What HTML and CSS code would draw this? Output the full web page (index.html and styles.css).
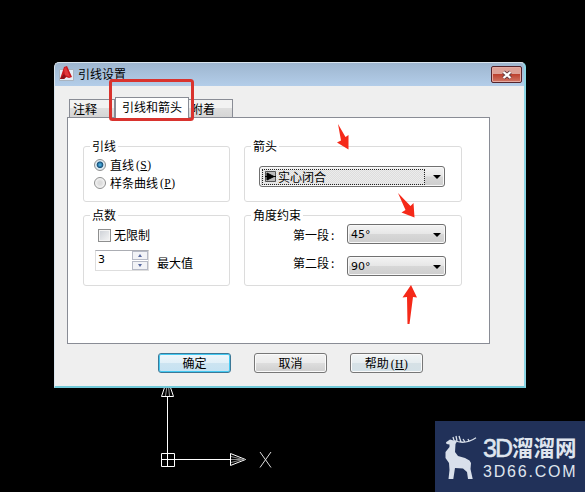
FILE: index.html
```html
<!DOCTYPE html>
<html lang="zh-CN">
<head>
<meta charset="utf-8">
<title>引线设置</title>
<link rel="stylesheet" href="styles.css">
</head>
<body>
<main class="canvas">
  <svg class="axes" width="125" height="92" viewBox="150 380 125 92" fill="none" stroke="#fff">
    <path d="M161.500 396.500L165 386H170L173.500 396.500Z"/>
    <path d="M165.500 396L167 386M169.500 396L168.500 386" stroke="#999"/>
    <path d="M167.500 396V466M161 459.500H231M161.500 453.500H174.500V466.500H161.500Z"/>
    <path d="M230.500 453.500L245.500 459.500L230.500 465.500Z"/>
    <path d="M231 456.500L243 459.500L231 462.500M231 459.500H245" stroke="#888"/>
    <path d="M260 452L271 467.500M271 452L260 467.500" stroke="#ddd"/>
  </svg>

  <section class="dialog">
    <header class="titlebar">
      <svg class="app-icon" width="16" height="16" viewBox="0 0 16 16">
        <path d="M.5 3.500H14.500V14.500H.5Z" fill="#e5edf5" stroke="#a9b3bf"/>
        <path d="M1 13L5 1L8 0L13 11L10 12L7 11L5 13Z" fill="#c9171e"/>
        <path d="M5 3L6 9L11 11L7 1Z" fill="#e0373b"/>
        <path d="M1 13L5 8L7 11L5 13Z" fill="#8e1117"/>
      </svg>
      <h1 class="title">引线设置</h1>
      <button class="close" aria-label="关闭">
        <svg width="12" height="10" viewBox="0 0 12 10"><path d="M2.500 2L9.500 8M9.500 2L2.500 8" stroke="#643b40" stroke-width="4"/><path d="M2.500 2L9.500 8M9.500 2L2.500 8" stroke="#fff" stroke-width="2.300"/></svg>
      </button>
    </header>
    <div class="body">
      <nav class="tabs">
        <span class="tab">注释</span><span class="tab active">引线和箭头</span><span class="tab last">附着</span>
      </nav>
      <div class="panel">
        <div class="group">
          <h2 class="legend">引线</h2>
          <label class="radio-row"><i class="radio checked"></i>直线<span class="key">(<u>S</u>)</span></label>
          <label class="radio-row"><i class="radio"></i>样条曲线<span class="key">(<u>P</u>)</span></label>
        </div>
        <div class="group">
          <h2 class="legend">箭头</h2>
          <div class="select wide">
            <span class="focus"><svg width="11" height="11" viewBox="0 0 11 11"><path d="M.5 .5H10.500V10.500H.5Z" fill="#bbb" stroke="#555"/><path d="M0 5.500H11M2 2L9 5.500L2 9Z" fill="#000" stroke="#000"/></svg>实心闭合</span>
            <i class="arrow"></i>
          </div>
        </div>
        <div class="group">
          <h2 class="legend">点数</h2>
          <label class="check-row"><i class="checkbox"></i>无限制</label>
          <div class="spin-row">
            <div class="spinner"><span class="num">3</span><span class="steps"><i class="step up"></i><i class="step down"></i></span></div>
            <span class="max">最大值</span>
          </div>
        </div>
        <div class="group">
          <h2 class="legend">角度约束</h2>
          <div class="angle-row first"><span class="angle-label">第一段<b class="colon">:</b></span><div class="select small"><span class="num">45°</span><i class="arrow"></i></div></div>
          <div class="angle-row second"><span class="angle-label">第二段<b class="colon">:</b></span><div class="select small"><span class="num">90°</span><i class="arrow"></i></div></div>
        </div>
      </div>
      <footer class="buttons">
        <button class="btn primary">确定</button>
        <button class="btn">取消</button>
        <button class="btn help">帮助<span class="key">(<u>H</u>)</span></button>
      </footer>
    </div>
  </section>

  <svg class="marks" width="585" height="492" viewBox="0 0 585 492">
    <rect x="110.500" y="80.500" width="82" height="39" rx="2" fill="none" stroke="#d9332e" stroke-width="3"/>
    <g fill="#f52919">
      <path d="M338 124L345.500 137L348.500 135L348.500 149.500L337 142.500L341 140.500Z"/>
      <path d="M398 193L410.500 206L413.500 203L414.500 217.500L401.500 212.500L405.500 210Z"/>
      <path d="M411 285L417 297.500L413 297L409.500 324L407.500 324L407 297L402.500 297.500Z"/>
    </g>
  </svg>

  <aside class="brand">
    <svg class="deer" width="34" height="45" viewBox="0 0 34 45">
      <path d="M1 7.300L5 4.500L12 6.500L10.500 9L10 17L13 21L20 23L24.500 25.500L26 28L25.500 34L27.700 44H23L22 37L18 33.500L10 33L8.300 44H3.500L4.500 35L4 28L.5 23L.5 17L4.500 12V9.500L1.500 9Z" fill="#d9e0eb"/>
      <path d="M9 5.500C15 8 23 8 31 2.700M9 5.500L8 2M12 6L11 1M16 7L14 1M20 7L18 4M24 6.500L23 4" fill="none" stroke="#d9e0eb" stroke-width="1.300"/>
    </svg>
    <div class="brand-text">
      <div class="brand-name"><span class="latin">3D</span>溜溜网</div>
      <div class="brand-url">3D66.COM</div>
    </div>
  </aside>
</main>
</body>
</html>
```
FILE: styles.css
```css
* { box-sizing: border-box; }
body {
  margin: 0;
  background: #000;
  font: 12px/14px "Noto Sans CJK SC", sans-serif;
  color: #000;
}
h1, h2 { margin: 0; font: inherit; }
button { font: inherit; color: inherit; padding: 0; }
.canvas { position: relative; width: 585px; height: 492px; overflow: hidden; background: #000; }
.axes { position: absolute; left: 150px; top: 380px; }
.dialog {
  position: absolute; left: 54px; top: 62px;
  width: 472px; height: 326px;
  background: #efefef;
  border: 1px solid #d9e4ed;
  border-right: 2px solid #8bd5e4;
  border-bottom: 2px solid #72c9d8;
  border-radius: 5px 5px 0 0;
  overflow: hidden;
}
.titlebar {
  display: flex; align-items: center;
  height: 23px; padding: 0 2px 1px 4px;
  background: linear-gradient(#9eb6cf, #b3cde9);
}
.title { margin-left: 3px; flex: 1; }
.close {
  display: flex; align-items: center; justify-content: center;
  width: 31px; height: 17px; margin-top: 1px;
  border: 1px solid #54232b; border-radius: 2px;
  background: linear-gradient(#dda197 0 45%, #bd4230 50%, #d07766);
  box-shadow: inset 0 0 0 1px #e5aaa1;
}
.body { padding: 11px 0 0 12px; }
.tabs { display: flex; align-items: flex-end; height: 20px; padding-left: 2px; }
.tab {
  width: 46px; height: 18px; padding: 2px 0 0 3px;
  border: 1px solid #898c95; border-bottom: 0;
  background: linear-gradient(#f2f2f2 0 45%, #dedede 50%, #d5d5d5);
  white-space: nowrap;
}
.tab.active {
  position: relative; width: 74px; height: 21px; padding: 2px 0 0 6px;
  margin-bottom: -1px; background: #fff;
}
.tab.last { width: 44px; padding-left: 2px; border-left: 0; }
.panel {
  display: grid; grid-template-columns: 147px 218px; grid-template-rows: 56px 71px;
  column-gap: 14px; row-gap: 13px; align-content: start;
  width: 423px; height: 227px; padding: 28px 0 0 15px;
  border: 1px solid #898c95; background: #fff;
}
.group { border: 1px solid #dcdcdc; border-radius: 3px; }
.legend { width: max-content; height: 14px; margin: -8px 0 0 6px; padding: 0 2px; background: #fff; }
.radio-row { display: flex; align-items: center; height: 18px; padding-left: 10px; }
.legend + .radio-row { margin-top: 3px; }
.radio {
  width: 12px; height: 12px; margin-right: 4px;
  border: 1px solid #8e8f8f; border-radius: 50%;
  background: radial-gradient(circle, #ddd 25%, #f5f5f5 70%);
}
.radio.checked { background: radial-gradient(circle at 50% 48%, #45a6d7 0 12%, #174f79 40%, #dceaf2 52%); }
.key { font-family: "Liberation Serif", serif; font-size: 11.5px; letter-spacing: .5px; margin-left: 2px; }
.key u { text-underline-offset: 1px; }
.select {
  display: flex; align-items: center;
  border: 1px solid #707070; border-radius: 3px;
  background: linear-gradient(#f3f3f3, #e7e7e7 48%, #d7d7d7 52%, #cecece);
  box-shadow: inset 0 0 0 1px #f8f8f8;
}
.wide { width: 186px; height: 21px; margin: 13px 0 0 14px; padding-left: 2px; }
.focus {
  display: flex; align-items: center; gap: 2px;
  width: 163px; height: 16px; padding-left: 2px; border: 1px dotted #222;
  background: repeating-conic-gradient(#ececec 0 25%, #dedede 0 50%) 0 0 / 2px 2px;
}
.arrow {
  margin: 1px 4px 0 auto;
  border: 4px solid transparent; border-top-color: #000; border-bottom: 0;
}
.wide .arrow { margin-right: 3px; }
.check-row { display: flex; align-items: center; height: 14px; margin: 6px 0 0 14px; }
.checkbox {
  width: 13px; height: 13px; margin-right: 3px;
  border: 1px solid #8e8f8f; background: linear-gradient(135deg, #cbcfd5, #f6f6f6);
  box-shadow: inset 0 0 0 1px #f4f4f4;
}
.spin-row { display: flex; margin: 8px 0 0 11px; }
.spinner { display: flex; justify-content: space-between; width: 54px; height: 21px; border: 1px solid #dedede; border-top-color: #abadb3; }
.num { font-family: "DejaVu Sans", sans-serif; font-size: 11px; letter-spacing: -.4px; }
.small .num { padding-top: 1px; letter-spacing: 0; }
.spinner .num { padding: 2px 0 0 2px; }
.steps { display: flex; flex-direction: column; gap: 1px; width: 16px; }
.step { display: flex; align-items: center; justify-content: center; height: 9px; border: 1px solid #b6bac6; background: #f2f3f6; }
.step::before { content: ""; border: 2.5px solid transparent; }
.up::before { border-top: 0; border-bottom: 3px solid #5969a0; }
.down::before { border-bottom: 0; border-top: 3px solid #5969a0; }
.max { margin: 6px 0 0 8px; }
.angle-row { display: flex; align-items: flex-start; padding-left: 48px; }
.angle-row.first { margin-top: 2px; }
.angle-row.second { margin-top: 12px; }
.angle-label { display: flex; width: 54px; padding-top: 4px; }
.second .angle-label { padding-top: 0; }
.colon { font-weight: normal; margin-left: 2px; }
.small { width: 99px; height: 20px; padding-left: 3px; }
.buttons { display: flex; gap: 23px; margin: 9px 0 0 91px; }
.btn {
  width: 73px; height: 20px; line-height: 16px;
  border: 1px solid #777; border-radius: 3px;
  background: linear-gradient(#f3f3f3, #ebebeb 48%, #dddddd 52%, #cfcfcf);
  box-shadow: inset 0 0 0 1px #fafafa;
}
.primary {
  border-color: #3c7896;
  background: linear-gradient(#f0f7fb, #e1f0f8 48%, #cce4f1 52%, #c5e2f2);
  box-shadow: inset 0 0 0 1px #44c9f2;
}
.help { background: linear-gradient(#f2f5f6, #e6edf0 48%, #d6e1e6 52%, #d4e1e7); }
.marks { position: absolute; inset: 0; }
.brand {
  position: absolute; left: 435px; top: 421px;
  display: flex; width: 150px; height: 71px; padding: 14px 0 0 10px;
  background: #213159; color: #dfe5ee;
}
.brand-text { margin-left: 4px; white-space: nowrap; }
.brand-name { display: flex; height: 25px; font-size: 21.5px; line-height: 23px; font-weight: 700; }
.latin { width: 29px; font: 25px/27px "Liberation Sans", sans-serif; letter-spacing: -2px; -webkit-text-stroke: .5px #dfe5ee; }
.brand-url { margin-top: 4px; font: 16px/16px "Liberation Sans", sans-serif; letter-spacing: 1.8px; }
```
